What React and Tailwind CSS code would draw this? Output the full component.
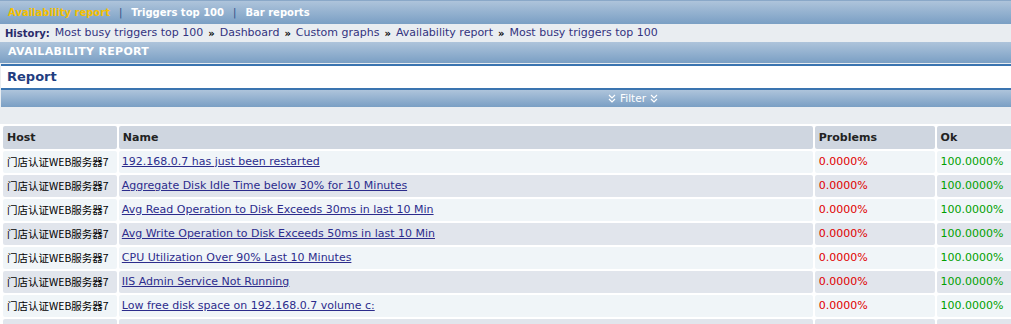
import React from "react";

const rows = [
  "192.168.0.7 has just been restarted",
  "Aggregate Disk Idle Time below 30% for 10 Minutes",
  "Avg Read Operation to Disk Exceeds 30ms in last 10 Min",
  "Avg Write Operation to Disk Exceeds 50ms in last 10 Min",
  "CPU Utilization Over 90% Last 10 Minutes",
  "IIS Admin Service Not Running",
  "Low free disk space on 192.168.0.7 volume c:",
  "",
];

const history = [
  "Most busy triggers top 100",
  "Dashboard",
  "Custom graphs",
  "Availability report",
  "Most busy triggers top 100",
];

const bar = "bg-gradient-to-b from-[#aec4db] to-[#7a9fc4]";

function Chevron() {
  return (
    <svg width="8" height="9" viewBox="0 0 8 9" className="inline-block">
      <path d="M1 1l3 3 3-3M1 5l3 3 3-3" stroke="#fff" strokeWidth="1.2" fill="none" />
    </svg>
  );
}

export default function App() {
  return (
    <div className="w-[1011px] h-[324px] overflow-hidden bg-white text-[11px] font-['DejaVu_Sans','Verdana',sans-serif]">
      {/* top menu */}
      <div className={`h-[24px] ${bar} border-t border-[#8aa8c8] flex items-center pl-[8px] font-bold text-[10px]`}>
        <span className="text-[#f5c000]">Availability report</span>
        <span className="text-[#2b4f86] mx-[9px] font-normal">|</span>
        <span className="text-white">Triggers top 100</span>
        <span className="text-[#2b4f86] mx-[9px] font-normal">|</span>
        <span className="text-white">Bar reports</span>
      </div>

      {/* history */}
      <div className="h-[18px] bg-[#e9edf1] flex items-center pl-[5px] text-[#33337f]">
        <span className="font-bold text-[10px] text-[#2a2a6a] mr-[5px]">History:</span>
        {history.map((h, i) => (
          <span key={i} className="flex items-center">
            {i > 0 && <span className="text-black font-bold text-[10px] mx-[5px]">»</span>}
            <span>{h}</span>
          </span>
        ))}
      </div>

      {/* page header */}
      <div className={`h-[21px] ${bar} flex items-center pl-[8px] text-white font-bold tracking-[0.3px]`}>
        AVAILABILITY REPORT
      </div>

      <div className="bg-[#e9edf1] pl-[1px] pt-[1px]">
        <div className="h-[26px] bg-white border-y-2 border-[#3a74b0] flex items-center pl-[6px] text-[13px] font-bold text-[#1f3d80]">
          Report
        </div>
        <div className={`h-[17px] ${bar} flex items-center text-white`}>
          <span className="ml-[607px] flex items-center gap-[3px]">
            <Chevron />
            <span className="px-[1px] text-[10.5px]">Filter</span>
            <Chevron />
          </span>
        </div>
        <div className="h-[18px]" />
      </div>

      {/* table */}
      <div className="bg-white pl-[1px]">
        <table className="border-separate border-spacing-x-[2px] border-spacing-y-[2px] -mt-[1px] w-[1270px] table-fixed">
          <colgroup>
            <col className="w-[113px]" />
            <col className="w-[689px]" />
            <col className="w-[119px]" />
            <col className="w-[330px]" />
          </colgroup>
          <thead>
            <tr className="h-[23px]">
              {["Host", "Name", "Problems", "Ok"].map((h) => (
                <th key={h} className="bg-[#cfd6e0] rounded-[2px] text-left font-bold text-[#222] pl-[4px] pt-[1px]">
                  {h}
                </th>
              ))}
            </tr>
          </thead>
          <tbody>
            {rows.map((r, i) => (
              <tr key={i} className={`h-[22px] ${i % 2 === 0 ? "bg-[#f0f5f8]" : "bg-[#e1e5ec]"}`}>
                <td className="pl-[4px] rounded-[2px] text-black text-[10.5px] font-['Noto_Sans_CJK_SC','DejaVu_Sans',sans-serif]">
                  {r ? "门店认证WEB服务器7" : ""}
                </td>
                <td className="pl-[3px] rounded-[2px]">
                  <span className="text-[#2c2c8c] underline">{r}</span>
                </td>
                <td className="pl-[4px] rounded-[2px] text-[#e00000]">{r ? "0.0000%" : ""}</td>
                <td className="pl-[4px] rounded-[2px] text-[#00a000]">{r ? "100.0000%" : ""}</td>
              </tr>
            ))}
          </tbody>
        </table>
      </div>
    </div>
  );
}
